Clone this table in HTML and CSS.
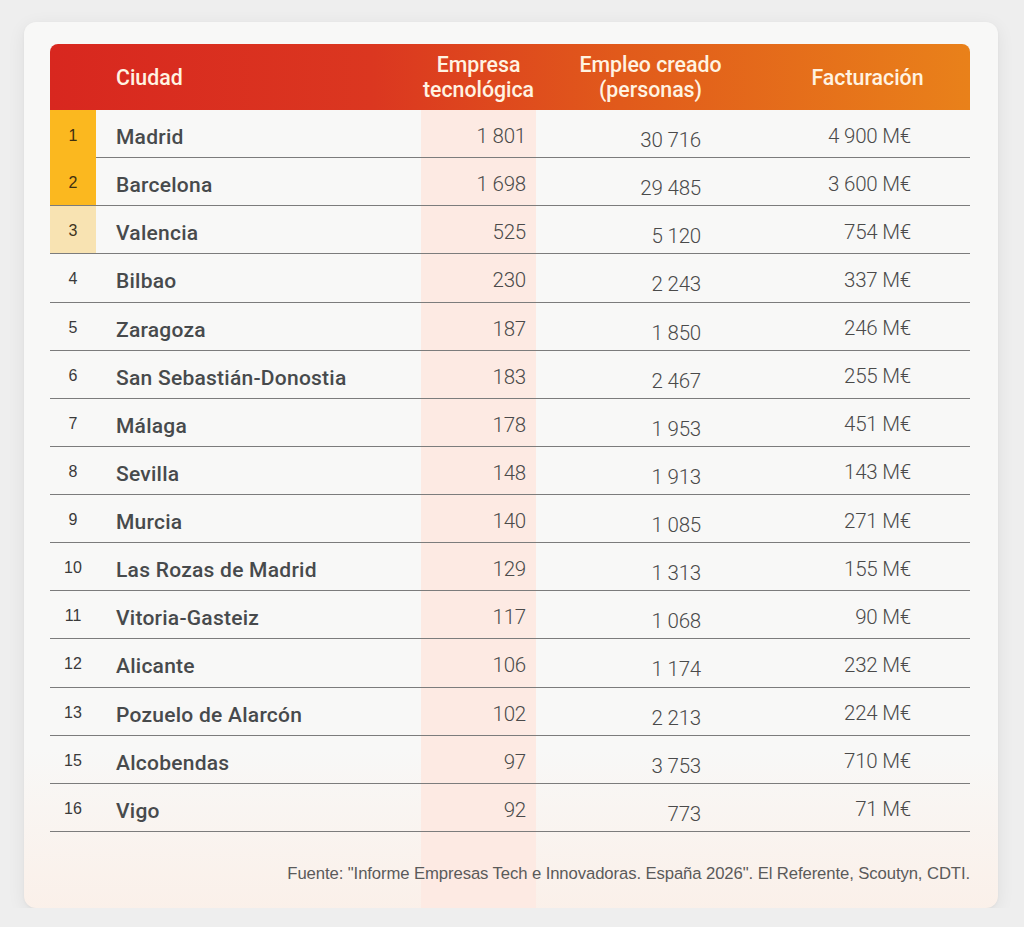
FILE: index.html
```html
<!DOCTYPE html>
<html lang="es">
<head>
<meta charset="utf-8">
<title>Ranking ciudades tecnológicas</title>
<link rel="stylesheet" href="styles.css">
</head>
<body>
<div class="card">
  <div class="table">
    <div class="row head">
      <div class="cell rank"></div>
      <div class="cell city">Ciudad</div>
      <div class="cell hc">Empresa<br>tecnológica</div>
      <div class="cell hc">Empleo creado<br>(personas)</div>
      <div class="cell hc">Facturación</div>
    </div>
    <div class="row"><div class="cell rank gold nob">1</div><div class="cell city">Madrid</div><div class="cell num">1 801</div><div class="cell num emp">30 716</div><div class="cell num fac">4 900 M€</div></div>
    <div class="row"><div class="cell rank gold">2</div><div class="cell city">Barcelona</div><div class="cell num">1 698</div><div class="cell num emp">29 485</div><div class="cell num fac">3 600 M€</div></div>
    <div class="row"><div class="cell rank pale">3</div><div class="cell city">Valencia</div><div class="cell num">525</div><div class="cell num emp">5 120</div><div class="cell num fac">754 M€</div></div>
    <div class="row"><div class="cell rank">4</div><div class="cell city">Bilbao</div><div class="cell num">230</div><div class="cell num emp">2 243</div><div class="cell num fac">337 M€</div></div>
    <div class="row"><div class="cell rank">5</div><div class="cell city">Zaragoza</div><div class="cell num">187</div><div class="cell num emp">1 850</div><div class="cell num fac">246 M€</div></div>
    <div class="row"><div class="cell rank">6</div><div class="cell city">San Sebastián-Donostia</div><div class="cell num">183</div><div class="cell num emp">2 467</div><div class="cell num fac">255 M€</div></div>
    <div class="row"><div class="cell rank">7</div><div class="cell city">Málaga</div><div class="cell num">178</div><div class="cell num emp">1 953</div><div class="cell num fac">451 M€</div></div>
    <div class="row"><div class="cell rank">8</div><div class="cell city">Sevilla</div><div class="cell num">148</div><div class="cell num emp">1 913</div><div class="cell num fac">143 M€</div></div>
    <div class="row"><div class="cell rank">9</div><div class="cell city">Murcia</div><div class="cell num">140</div><div class="cell num emp">1 085</div><div class="cell num fac">271 M€</div></div>
    <div class="row"><div class="cell rank">10</div><div class="cell city">Las Rozas de Madrid</div><div class="cell num">129</div><div class="cell num emp">1 313</div><div class="cell num fac">155 M€</div></div>
    <div class="row"><div class="cell rank">11</div><div class="cell city">Vitoria-Gasteiz</div><div class="cell num">117</div><div class="cell num emp">1 068</div><div class="cell num fac">90 M€</div></div>
    <div class="row"><div class="cell rank">12</div><div class="cell city">Alicante</div><div class="cell num">106</div><div class="cell num emp">1 174</div><div class="cell num fac">232 M€</div></div>
    <div class="row"><div class="cell rank">13</div><div class="cell city">Pozuelo de Alarcón</div><div class="cell num">102</div><div class="cell num emp">2 213</div><div class="cell num fac">224 M€</div></div>
    <div class="row"><div class="cell rank">15</div><div class="cell city">Alcobendas</div><div class="cell num">97</div><div class="cell num emp">3 753</div><div class="cell num fac">710 M€</div></div>
    <div class="row"><div class="cell rank">16</div><div class="cell city">Vigo</div><div class="cell num">92</div><div class="cell num emp">773</div><div class="cell num fac">71 M€</div></div>
  </div>
  <p class="source">Fuente: "Informe Empresas Tech e Innovadoras. España 2026". El Referente, Scoutyn, CDTI.</p>
</div>
</body>
</html>
```
FILE: styles.css
```css
html, body {
  margin: 0;
  padding: 0;
}
body {
  background: #eeeeee;
  font-family: "Liberation Sans", Arial, sans-serif;
  padding: 22px 26px 0 24px;
}
.card {
  width: 974px;
  box-sizing: border-box;
  padding: 22px 28px 24px 26px;
  border-radius: 12px;
  background:
    linear-gradient(#fdeae3, #fdeae3) no-repeat 397px 88px / 115px calc(100% - 88px),
    linear-gradient(to bottom, rgba(253,236,226,0) 82%, rgba(252,236,226,0.65) 100%),
    #f8f8f7;
  box-shadow: 0 4px 18px rgba(0,0,0,0.07), 0 1px 3px rgba(0,0,0,0.04);
}
.table {
  width: 920px;
}
.row {
  display: grid;
  grid-template-columns: 46px 325px 115px 229px 205px;
  height: 48.14px;
}
.row.head {
  height: 66px;
  border-radius: 8px 8px 0 0;
  background: linear-gradient(90deg, #d8271f 0%, #db3720 35%, #e15a1b 62%, #e9811a 100%);
  color: #fff3e2;
  font-family: Roboto, "Liberation Sans", sans-serif;
  font-weight: 500;
}
.cell {
  display: flex;
  align-items: center;
  box-sizing: border-box;
  border-bottom: 1.5px solid #7c7c7c;
}
.head .cell {
  border-bottom: none;
  padding-top: 0;
}
.head .city {
  color: #fff3e2;
  font-size: 21.3px;
  letter-spacing: 0;
  padding-top: 0;
}
.hc {
  justify-content: center;
  text-align: center;
  line-height: 25px;
  font-size: 21.3px;
}
.rank {
  justify-content: center;
  font-size: 16px;
  color: #3a3a3a;
  padding-top: 3px;
}
.rank.gold {
  background: #fbb81f;
  color: #3f2f10;
}
.rank.pale {
  background: #f8e3b2;
  color: #3f3420;
}
.rank.nob {
  border-bottom: none;
}
.city {
  padding-left: 20px;
  padding-top: 7px;
  font-family: Roboto, "Liberation Sans", sans-serif;
  font-size: 21px;
  font-weight: 500;
  letter-spacing: 0.25px;
  color: #474a4c;
}
.num {
  justify-content: flex-end;
  padding-right: 10px;
  padding-top: 5px;
  font-family: Roboto, "Liberation Sans", sans-serif;
  font-weight: 300;
  font-size: 20.5px;
  color: #4a4a4a;
  letter-spacing: -0.2px;
}
.num.emp {
  padding-right: 64px;
  padding-top: 13px;
}
.num.fac {
  padding-right: 59px;
  padding-top: 4px;
}
.source {
  margin: 32px 0 0;
  text-align: right;
  font-size: 16.7px;
  line-height: 20px;
  color: #5a5a5a;
  letter-spacing: -0.1px;
}
```
